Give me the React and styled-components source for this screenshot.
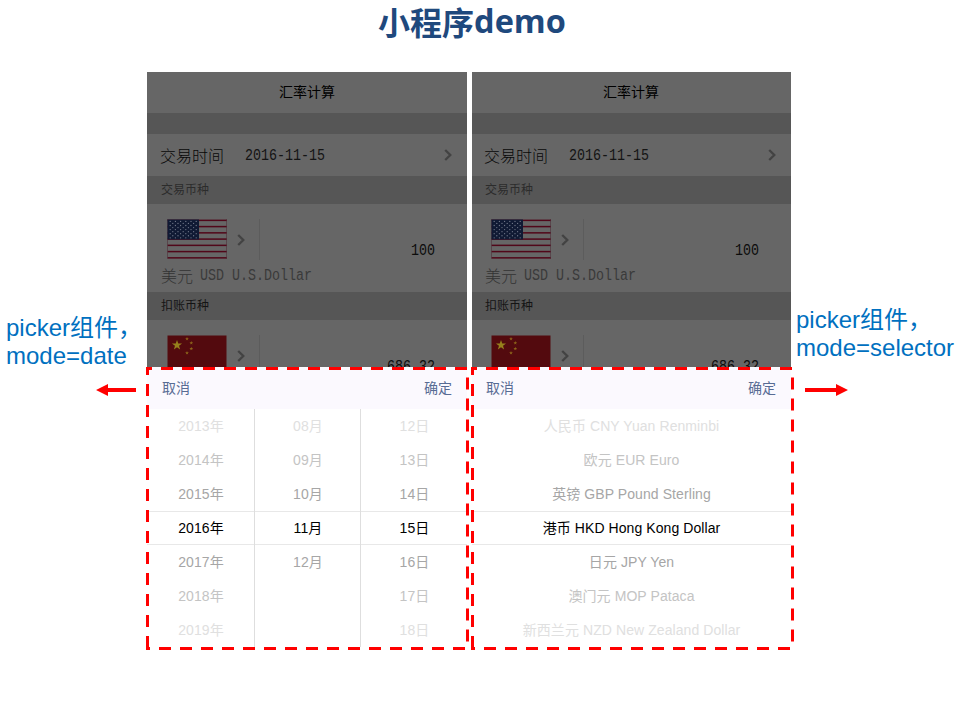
import React from 'react';
import styled, { createGlobalStyle } from 'styled-components';

const GlobalStyle = createGlobalStyle`
  * { box-sizing: border-box; }
  body { margin: 0; background: #fff; }
`;

const sans = `"Liberation Sans", "Noto Sans CJK SC", sans-serif`;

const Slide = styled.div`
  width: 960px;
  height: 720px;
  overflow: hidden;
  background: #fff;
  font-family: ${sans};
`;

const Title = styled.h1`
  margin: 0;
  height: 72px;
  padding: 0 16px 30px 0;
  display: flex;
  align-items: center;
  justify-content: center;
  font: 700 32px/42px "Noto Sans CJK SC", sans-serif;
  color: #1f497d;
  span { font-family: "Open Sans", "Noto Sans", sans-serif; font-size: 32.5px; }
`;

const Stage = styled.main`
  display: grid;
  grid-template-columns: 147px 320px 324px 1fr;
  height: 576px;
`;

const Note = styled.aside`
  display: flex;
  flex-direction: column;
  align-items: ${p => (p.$side === 'left' ? 'flex-end' : 'flex-start')};
  padding: ${p => (p.$side === 'left' ? '242px 0 0 6px' : '234px 0 0 5px')};
`;

const NoteText = styled.p`
  margin: 0;
  align-self: flex-start;
  font: 24px/28px ${sans};
  color: #0070c0;
  white-space: nowrap;
`;

const Arrow = styled.svg`
  display: block;
  width: ${p => (p.$side === 'left' ? 46 : 43)}px;
  height: 12px;
  margin: ${p => (p.$side === 'left' ? '14px 5px 0 0' : '22px 0 0 9px')};
`;

const Phone = styled.section`
  position: relative;
  width: ${p => p.$width}px;
  height: 576px;
  margin-left: ${p => p.$gap || 0}px;
`;

const Clip = styled.div`
  display: flex;
  justify-content: flex-end;
  overflow: hidden;
  width: 100%;
  height: 100%;
`;

const Screen = styled.div`
  flex: none;
  width: 320px;
  height: 576px;
  display: flex;
  flex-direction: column;
`;

const NavBar = styled.header`
  height: 41px;
  flex: none;
  background: #666;
  color: #000;
  font: 14px/41px ${sans};
  text-align: center;
`;

const Band = styled.div`
  flex: none;
  height: ${p => p.$height}px;
  padding-left: 14px;
  background: #565656;
  color: ${p => p.$ink || '#222'};
  font: 12px/${p => p.$height + 1}px ${sans};
`;

const DateRow = styled.div`
  flex: none;
  height: 42px;
  padding: 0 15px 0 13px;
  display: flex;
  align-items: center;
  background: #666;
  color: #080808;
  font: 300 16px/40px "Noto Sans CJK SC", sans-serif;
`;

const Mono = styled.span`
  display: inline-block;
  font-family: "Liberation Mono", "Noto Sans CJK SC", monospace;
  font-size: 13.33px;
  transform: scaleY(1.22);
`;

const DateValue = styled(Mono)`
  margin-left: 21px;
  flex: 1;
  line-height: 20px;
  padding-top: 1px;
  color: #141414;
`;

const Chevron = styled.svg`
  display: block;
  width: 8px;
  height: 12px;
  fill: none;
  stroke: #434343;
  stroke-width: 2.3;
`;

const Currency = styled.div`
  flex: none;
  height: ${p => p.$height}px;
  overflow: hidden;
  padding: 15px 32px 0 14px;
  background: #666;
`;

const FlagRow = styled.div`
  display: flex;
  height: 41px;
  padding-left: 6px;
`;

const Flag = styled.svg`
  display: block;
  width: 60px;
  height: 40px;
  margin-right: 10px;
`;

const ChevronBox = styled.div`
  display: flex;
  align-items: center;
  width: 23px;
  border-right: 1px solid #5c5c5c;
`;

const Amount = styled(Mono)`
  flex: 1;
  text-align: right;
  line-height: 20px;
  height: 20px;
  margin-top: 22px;
  color: #0c0c0c;
`;

const CurrencyName = styled.div`
  display: flex;
  font: 300 16px/20px "Noto Sans CJK SC", sans-serif;
  margin-top: 5px;
  color: #333;
  white-space: pre;
`;

const CurrencyCode = styled(Mono)`
  margin-left: -1px;
  padding-top: 1px;
  color: #3a3a3a;
`;

const PickerHead = styled.div`
  flex: none;
  height: 42px;
  padding: 0 15px;
  display: flex;
  justify-content: space-between;
  background: #fbf9fe;
  color: #586c94;
  font: 14px/42px ${sans};
`;

const PickerBody = styled.div`
  flex: none;
  display: grid;
  grid-template-columns: ${p => p.$columns};
  height: 238px;
  background: #fff;
`;

const PickerColumn = styled.div`
  border-right: ${p => (p.$last ? 0 : 1)}px solid #dedede;
`;

const fade = ['#000', '#a6a6a6', '#c4c4c4', '#e0e0e0'];

const Option = styled.div`
  height: 34px;
  border: solid #e8e8e8;
  border-width: ${p => (p.$distance === 0 ? '1px 0' : '0')};
  font: 14px/${p => (p.$distance === 0 ? 32 : 34)}px ${sans};
  letter-spacing: 0.08px;
  padding-left: 1px;
  text-align: center;
  color: ${p => fade[p.$distance]};
  white-space: pre;
`;

const Outline = styled.svg`
  position: absolute;
  left: -1px;
  top: 295px;
  width: 323px;
  height: 283px;
  overflow: hidden;
  stroke: #f00;
  stroke-width: 3;
`;

const starPoints = (cx, cy, r) =>
  Array.from({ length: 10 }, (_, i) => {
    const a = -Math.PI / 2 + (i * Math.PI) / 5;
    const d = i % 2 ? r * 0.4 : r;
    return `${(cx + d * Math.cos(a)).toFixed(2)},${(cy + d * Math.sin(a)).toFixed(2)}`;
  }).join(' ');

function UsFlag() {
  return (
    <Flag viewBox="0 0 60 40">
      <rect width="60" height="40" fill="#666" />
      {[0, 1, 2, 3, 4, 5, 6].map(i => (
        <rect key={i} x="0.5" y={0.6 + i * 6.25} width="59.5" height="1.5" fill="#510719" />
      ))}
      <path d="M0.5 0V39.5M59.5 0V39.5" stroke="#51303a" strokeWidth=".6" />
      <rect x="0.5" y="0.5" width="31.5" height="20" fill="#101a34" />
      {Array.from({ length: 9 }, (_, r) =>
        Array.from({ length: r % 2 ? 5 : 6 }, (_, c) => (
          <circle key={`${r}-${c}`} cx={3.2 + c * 5.2 + (r % 2 ? 2.6 : 0)} cy={2.4 + r * 2.05} r="0.65" fill="#707789" />
        ))
      )}
    </Flag>
  );
}

function ChinaFlag() {
  return (
    <Flag viewBox="0 0 60 40">
      <rect x="0.5" y="0.5" width="59" height="39.5" fill="#530a0e" />
      <polygon points={starPoints(10, 10.2, 5.3)} fill="#96801c" />
      {[[20, 3.8], [24.3, 8], [24.3, 13.7], [20, 18]].map(([x, y]) => (
        <polygon key={y} points={starPoints(x, y, 2)} fill="#8c641a" />
      ))}
    </Flag>
  );
}

function Arrowhead() {
  return (
    <Chevron viewBox="0 0 8 12">
      <path d="M1.2 1L6.3 6L1.2 11" />
    </Chevron>
  );
}

function DashedOutline() {
  return (
    <Outline>
      <path d="M-6 1.5H323" strokeDasharray="12 9" />
      <path d="M321.5 10.5V283" strokeDasharray="12 9" />
      <path d="M-8 281.5H323" strokeDasharray="12 9" />
      <path d="M1.5 -4V283" strokeDasharray="12 9" />
    </Outline>
  );
}

function Column({ items, last }) {
  return (
    <PickerColumn $last={last}>
      {items.map((item, i) => (
        <Option key={i} $distance={Math.abs(i - 3)}>{item}</Option>
      ))}
    </PickerColumn>
  );
}

function RatePhone({ width, gap, columns, template }) {
  return (
    <Phone $width={width} $gap={gap}>
      <Clip>
        <Screen>
          <NavBar>汇率计算</NavBar>
          <Band $height={21} />
          <DateRow>
            交易时间
            <DateValue>2016-11-15</DateValue>
            <Arrowhead />
          </DateRow>
          <Band $height={28} $ink="#2c2c2c">交易币种</Band>
          <Currency $height={88}>
            <FlagRow>
              <UsFlag />
              <ChevronBox><Arrowhead /></ChevronBox>
              <Amount>100</Amount>
            </FlagRow>
            <CurrencyName>美元<CurrencyCode> USD U.S.Dollar</CurrencyCode></CurrencyName>
          </Currency>
          <Band $height={28} $ink="#141414">扣账币种</Band>
          <Currency $height={47}>
            <FlagRow>
              <ChinaFlag />
              <ChevronBox><Arrowhead /></ChevronBox>
              <Amount>686.32</Amount>
            </FlagRow>
          </Currency>
          <PickerHead><span>取消</span><span>确定</span></PickerHead>
          <PickerBody $columns={template}>
            {columns.map((items, i) => (
              <Column key={i} items={items} last={i === columns.length - 1} />
            ))}
          </PickerBody>
        </Screen>
      </Clip>
      <DashedOutline />
    </Phone>
  );
}

const dateColumns = [
  ['2013年', '2014年', '2015年', '2016年', '2017年', '2018年', '2019年'],
  ['08月', '09月', '10月', '11月', '12月', '', ''],
  ['12日', '13日', '14日', '15日', '16日', '17日', '18日'],
];

const currencyColumns = [[
  '人民币 CNY Yuan Renminbi',
  '欧元 EUR Euro',
  '英镑 GBP Pound Sterling',
  '港币 HKD Hong Kong Dollar',
  '日元 JPY Yen',
  '澳门元 MOP Pataca',
  '新西兰元 NZD New Zealand Dollar',
]];

export default function App() {
  return (
    <Slide>
      <GlobalStyle />
      <Title>小程序<span>demo</span></Title>
      <Stage>
        <Note $side="left">
          <NoteText>picker组件，<br />mode=date</NoteText>
          <Arrow $side="left" viewBox="0 0 46 12">
            <path d="M0 6L12 0V4H40V8H12V12Z" fill="#f00" />
          </Arrow>
        </Note>
        <RatePhone width={320} columns={dateColumns} template="108px 106px 106px" />
        <RatePhone width={319} gap={5} columns={currencyColumns} template="1fr" />
        <Note $side="right">
          <NoteText>picker组件，<br />mode=selector</NoteText>
          <Arrow $side="right" viewBox="0 0 43 12">
            <path d="M43 6L31 0V4H0V8H31V12Z" fill="#f00" />
          </Arrow>
        </Note>
      </Stage>
    </Slide>
  );
}
